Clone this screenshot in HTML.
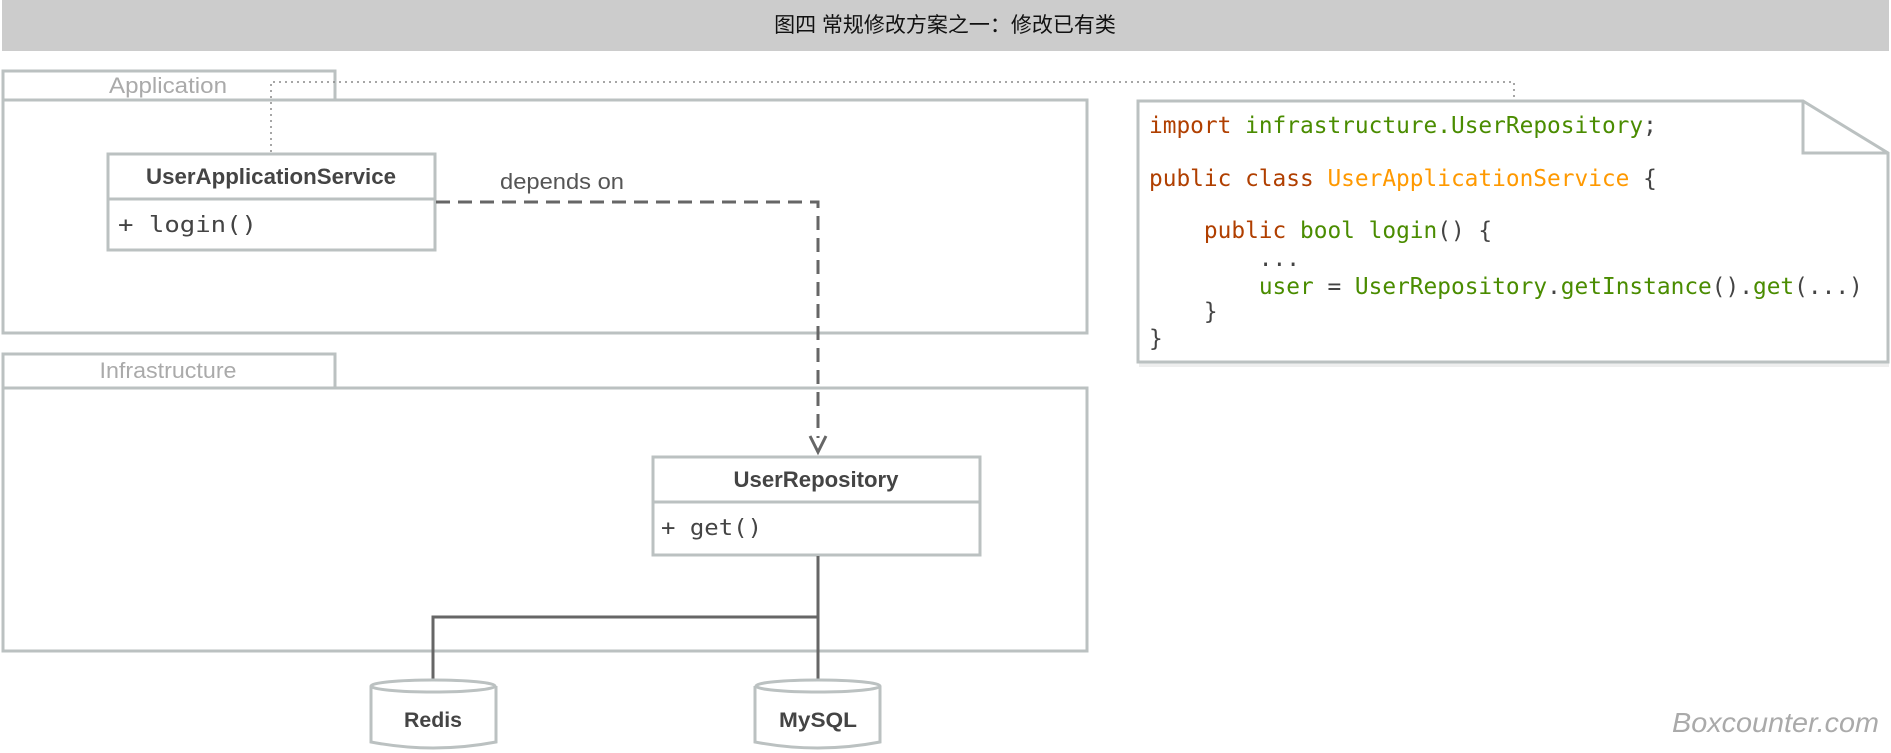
<!DOCTYPE html>
<html><head><meta charset="utf-8"><style>
html,body{margin:0;padding:0;background:#fff;width:1891px;height:753px;overflow:hidden}
svg{display:block}
.s{font-family:"Liberation Sans","Noto Sans CJK SC",sans-serif}
.m{font-family:"DejaVu Sans Mono","Liberation Mono",monospace}
</style></head><body>
<svg width="1891" height="753" viewBox="0 0 1891 753" xmlns="http://www.w3.org/2000/svg">
<rect x="2" y="0" width="1887" height="51" fill="#cccccc"/>
<text x="945" y="32" text-anchor="middle" class="s" font-size="21" fill="#111">图四 常规修改方案之一：修改已有类</text>

<g fill="none" stroke="#bbc1c1" stroke-width="3">
<rect x="3" y="71" width="332" height="29"/>
<rect x="3" y="100" width="1084" height="233"/>
<rect x="3" y="354" width="332" height="34"/>
<rect x="3" y="388" width="1084" height="263"/>
</g>
<text x="168" y="93" text-anchor="middle" class="s" font-size="22" fill="#aaa" textLength="118" lengthAdjust="spacingAndGlyphs">Application</text>
<text x="168" y="378" text-anchor="middle" class="s" font-size="22" fill="#aaa" textLength="137" lengthAdjust="spacingAndGlyphs">Infrastructure</text>

<path d="M271 152 V82 H1514 V100" fill="none" stroke="#888" stroke-width="1.5" stroke-dasharray="2 4"/>

<g fill="#fff" stroke="#bbc1c1" stroke-width="3">
<rect x="108" y="154" width="327" height="96"/>
<rect x="653" y="457" width="327" height="98"/>
</g>
<g stroke="#bbc1c1" stroke-width="3"><line x1="108" y1="199" x2="435" y2="199"/><line x1="653" y1="502" x2="980" y2="502"/></g>
<text x="271" y="184" text-anchor="middle" class="s" font-size="22" font-weight="bold" fill="#444" textLength="250" lengthAdjust="spacingAndGlyphs">UserApplicationService</text>
<text x="118" y="232" class="m" font-size="22" fill="#444" textLength="139" lengthAdjust="spacingAndGlyphs">+ login()</text>
<text x="816" y="487" text-anchor="middle" class="s" font-size="22" font-weight="bold" fill="#444" textLength="165" lengthAdjust="spacingAndGlyphs">UserRepository</text>
<text x="661" y="535" class="m" font-size="22" fill="#444" textLength="101" lengthAdjust="spacingAndGlyphs">+ get()</text>

<text x="500" y="189" class="s" font-size="22" fill="#555" textLength="124" lengthAdjust="spacingAndGlyphs">depends on</text>
<path d="M436 202 H818 V438" fill="none" stroke="#666" stroke-width="3" stroke-dasharray="14 8"/>
<path d="M810 436 L818 452 L826 436" fill="none" stroke="#666" stroke-width="3"/>

<path d="M818 556 V680 M818 617 H433 V680" fill="none" stroke="#666" stroke-width="3"/>

<g fill="#fff" stroke="#bbc1c1" stroke-width="3">
<path d="M371 686 V742 Q433 754 496 742 V686"/>
<ellipse cx="433" cy="686" rx="62" ry="6"/>
<path d="M755 686 V742 Q818 754 880 742 V686"/>
<ellipse cx="818" cy="686" rx="62" ry="6"/>
</g>
<text x="433" y="727" text-anchor="middle" class="s" font-size="21" font-weight="bold" fill="#444" textLength="58" lengthAdjust="spacingAndGlyphs">Redis</text>
<text x="818" y="727" text-anchor="middle" class="s" font-size="21" font-weight="bold" fill="#444" textLength="78" lengthAdjust="spacingAndGlyphs">MySQL</text>

<rect x="1139" y="363" width="750" height="4" fill="#eee"/>
<path d="M1138 101 H1803 L1888 153 V362 H1138 Z" fill="#fff" stroke="#bbc1c1" stroke-width="3"/>
<path d="M1803 101 V153 H1888" fill="none" stroke="#bbc1c1" stroke-width="3"/>
<g class="m" font-size="22.8">
<text x="1149" y="133"><tspan fill="#b03f00">import</tspan> <tspan fill="#4a8c00">infrastructure.UserRepository</tspan><tspan fill="#444">;</tspan></text>
<text x="1149" y="186"><tspan fill="#b03f00">public class</tspan> <tspan fill="#ff9900">UserApplicationService</tspan> <tspan fill="#444">{</tspan></text>
<text x="1149" y="238" xml:space="preserve"><tspan fill="#444">    </tspan><tspan fill="#b03f00">public</tspan> <tspan fill="#4a8c00">bool login</tspan><tspan fill="#444">() {</tspan></text>
<text x="1149" y="266" xml:space="preserve" fill="#444">        ...</text>
<text x="1149" y="294" xml:space="preserve"><tspan>        </tspan><tspan fill="#4a8c00">user</tspan><tspan fill="#444"> = </tspan><tspan fill="#4a8c00">UserRepository</tspan><tspan fill="#444">.</tspan><tspan fill="#4a8c00">getInstance</tspan><tspan fill="#444">().</tspan><tspan fill="#4a8c00">get</tspan><tspan fill="#444">(...)</tspan></text>
<text x="1149" y="319" xml:space="preserve" fill="#444">    }</text>
<text x="1149" y="346" fill="#444">}</text>
</g>

<text x="1879" y="732" text-anchor="end" class="s" font-size="28" font-style="italic" fill="#aaa" textLength="207" lengthAdjust="spacingAndGlyphs">Boxcounter.com</text>
</svg>
</body></html>
